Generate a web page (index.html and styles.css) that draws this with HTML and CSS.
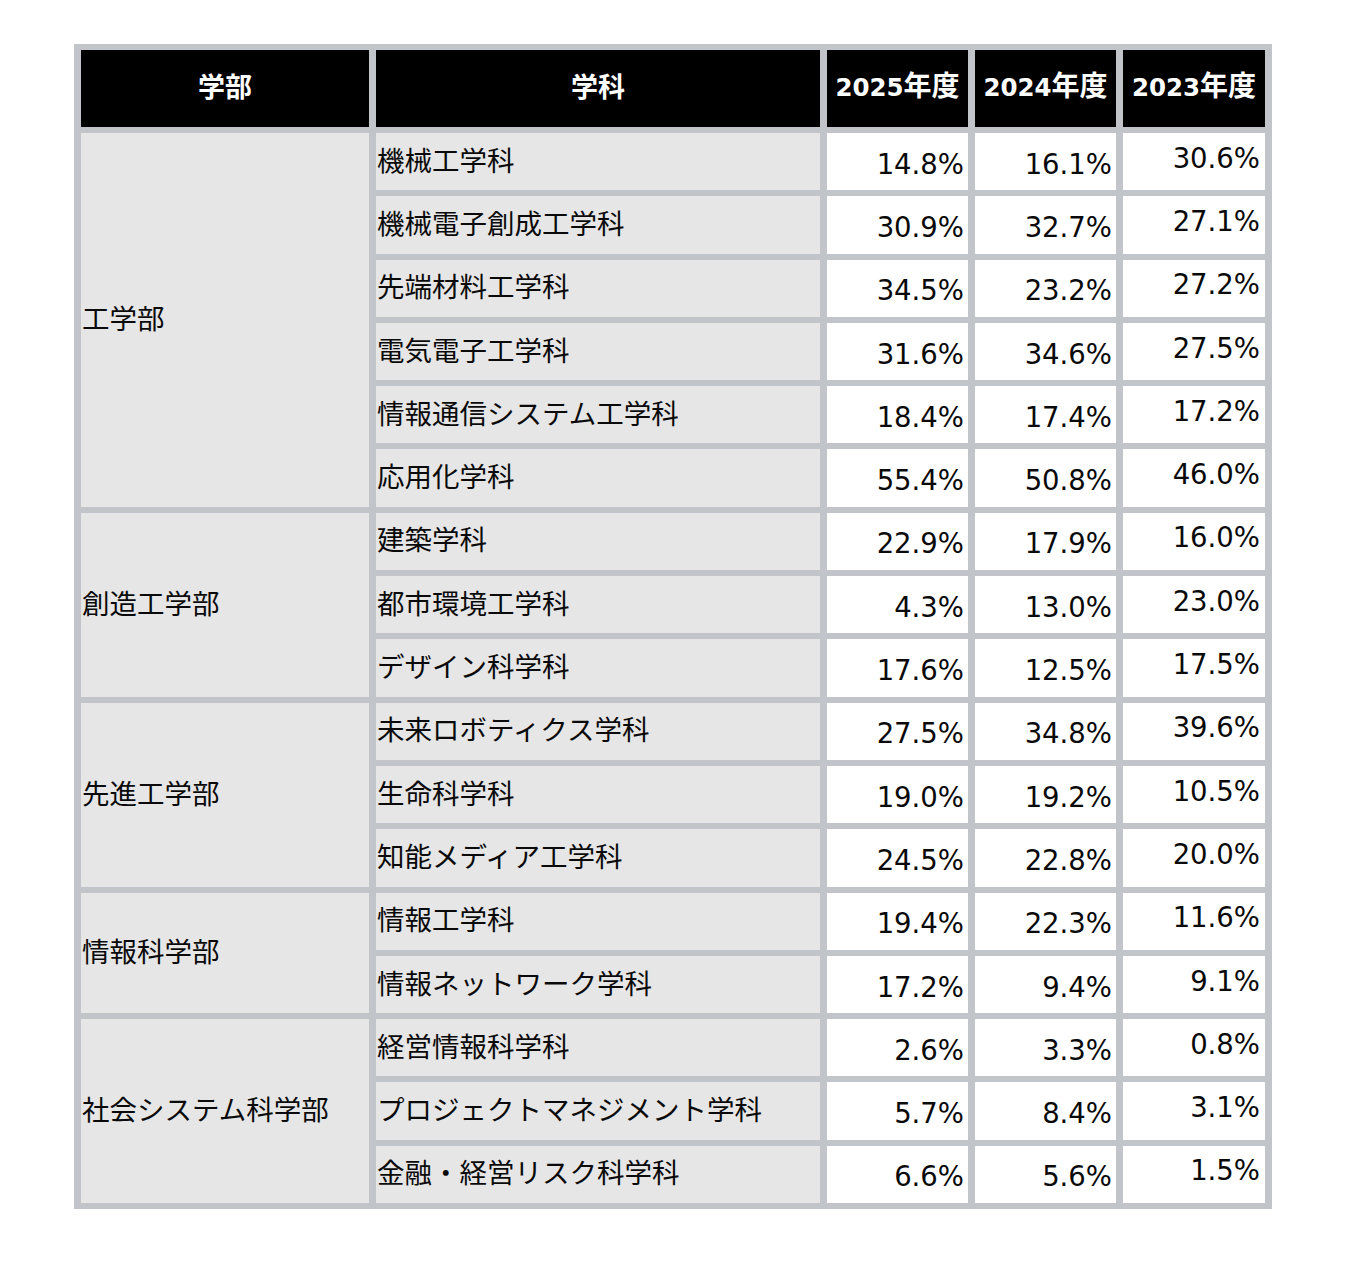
FILE: index.html
```html
<!DOCTYPE html>
<html lang="ja">
<head>
<meta charset="utf-8">
<title>学部・学科別</title>
<link rel="stylesheet" href="styles.css">
</head>
<body>
<div class="page">
<table class="rates">
  <colgroup>
    <col class="c-fac">
    <col class="c-dep">
    <col class="c-yr">
    <col class="c-yr">
    <col class="c-yr3">
  </colgroup>
  <thead>
    <tr>
      <th>学部</th>
      <th>学科</th>
      <th class="yr"><span class="num">2025</span>年度</th>
      <th class="yr"><span class="num">2024</span>年度</th>
      <th class="yr"><span class="num">2023</span>年度</th>
    </tr>
  </thead>
  <tbody>
    <tr><td class="fac" rowspan="6">工学部</td><td class="dep">機械工学科</td><td class="v">14.8%</td><td class="v">16.1%</td><td class="v v3">30.6%</td></tr>
    <tr><td class="dep">機械電子創成工学科</td><td class="v">30.9%</td><td class="v">32.7%</td><td class="v v3">27.1%</td></tr>
    <tr><td class="dep">先端材料工学科</td><td class="v">34.5%</td><td class="v">23.2%</td><td class="v v3">27.2%</td></tr>
    <tr><td class="dep">電気電子工学科</td><td class="v">31.6%</td><td class="v">34.6%</td><td class="v v3">27.5%</td></tr>
    <tr><td class="dep">情報通信システム工学科</td><td class="v">18.4%</td><td class="v">17.4%</td><td class="v v3">17.2%</td></tr>
    <tr><td class="dep">応用化学科</td><td class="v">55.4%</td><td class="v">50.8%</td><td class="v v3">46.0%</td></tr>
    <tr><td class="fac" rowspan="3">創造工学部</td><td class="dep">建築学科</td><td class="v">22.9%</td><td class="v">17.9%</td><td class="v v3">16.0%</td></tr>
    <tr><td class="dep">都市環境工学科</td><td class="v">4.3%</td><td class="v">13.0%</td><td class="v v3">23.0%</td></tr>
    <tr><td class="dep">デザイン科学科</td><td class="v">17.6%</td><td class="v">12.5%</td><td class="v v3">17.5%</td></tr>
    <tr><td class="fac" rowspan="3">先進工学部</td><td class="dep">未来ロボティクス学科</td><td class="v">27.5%</td><td class="v">34.8%</td><td class="v v3">39.6%</td></tr>
    <tr><td class="dep">生命科学科</td><td class="v">19.0%</td><td class="v">19.2%</td><td class="v v3">10.5%</td></tr>
    <tr><td class="dep">知能メディア工学科</td><td class="v">24.5%</td><td class="v">22.8%</td><td class="v v3">20.0%</td></tr>
    <tr><td class="fac" rowspan="2">情報科学部</td><td class="dep">情報工学科</td><td class="v">19.4%</td><td class="v">22.3%</td><td class="v v3">11.6%</td></tr>
    <tr><td class="dep">情報ネットワーク学科</td><td class="v">17.2%</td><td class="v">9.4%</td><td class="v v3">9.1%</td></tr>
    <tr><td class="fac" rowspan="3">社会システム科学部</td><td class="dep">経営情報科学科</td><td class="v">2.6%</td><td class="v">3.3%</td><td class="v v3">0.8%</td></tr>
    <tr><td class="dep">プロジェクトマネジメント学科</td><td class="v">5.7%</td><td class="v">8.4%</td><td class="v v3">3.1%</td></tr>
    <tr><td class="dep">金融・経営リスク科学科</td><td class="v">6.6%</td><td class="v">5.6%</td><td class="v v3">1.5%</td></tr>
  </tbody>
</table>
</div>
</body>
</html>
```

FILE: styles.css
```css
html, body {
  margin: 0;
  padding: 0;
  background: #ffffff;
}

.page {
  padding: 44px 0 0 74px;
}

.rates {
  border-collapse: separate;
  border-spacing: 7px 6.3px;
  background: #c1c5c9;
  width: 1196px;
  table-layout: fixed;
  font-family: "Noto Sans CJK JP", sans-serif;
  color: #0a0a0a;
}

.c-fac { width: 288px; }
.c-dep { width: 444px; }
.c-yr { width: 141px; }
.c-yr3 { width: 142px; }

.rates th {
  background: #000000;
  color: #ffffff;
  height: 77px;
  padding: 0 0 5px 0;
  font-weight: 700;
  font-size: 27px;
  line-height: 32px;
  text-align: center;
  vertical-align: middle;
  white-space: nowrap;
  box-sizing: border-box;
}

.rates th.yr {
  font-size: 28px;
}

.rates th .num {
  font-family: "DejaVu Sans", sans-serif;
  font-size: 24.5px;
}

.rates td {
  height: 57.3px;
  padding: 0;
  box-sizing: border-box;
  vertical-align: middle;
  white-space: nowrap;
}

.fac, .dep {
  background: #e6e6e6;
  font-size: 27.5px;
  line-height: 32px;
  padding: 0 0 6px 1px !important;
  text-align: left;
}

.v {
  background: #ffffff;
  font-family: "DejaVu Sans", sans-serif;
  font-size: 27.5px;
  line-height: 32px;
  text-align: right;
  padding: 4px 4px 0 0 !important;
}

.v.v3 {
  padding: 0 5px 8px 0 !important;
}
```
